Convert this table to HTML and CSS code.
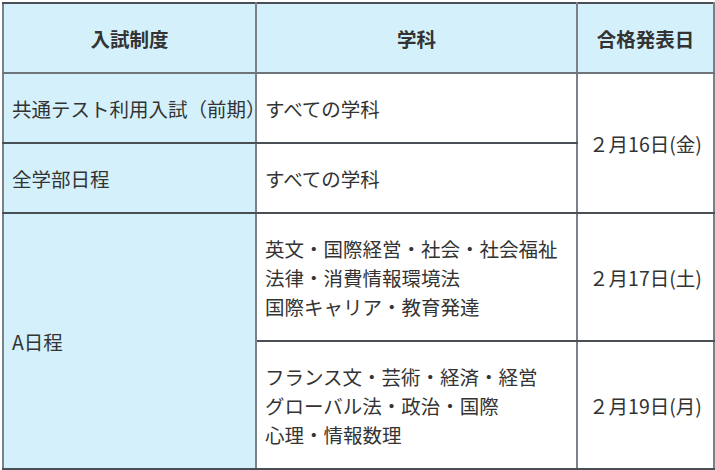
FILE: index.html
```html
<!DOCTYPE html>
<html lang="ja">
<head>
<meta charset="utf-8">
<link rel="stylesheet" href="styles.css">
</head>
<body>
<table class="sched">
  <colgroup>
    <col class="c1">
    <col class="c2">
    <col class="c3">
  </colgroup>
  <thead>
    <tr>
      <th>入試制度</th>
      <th>学科</th>
      <th>合格発表日</th>
    </tr>
  </thead>
  <tbody>
    <tr>
      <td class="kind">共通テスト利用入試（前期）</td>
      <td class="dept">すべての学科</td>
      <td class="date" rowspan="2">２月16日(金)</td>
    </tr>
    <tr>
      <td class="kind">全学部日程</td>
      <td class="dept">すべての学科</td>
    </tr>
    <tr>
      <td class="kind" rowspan="2">A日程</td>
      <td class="dept">英文・国際経営・社会・社会福祉<br>法律・消費情報環境法<br>国際キャリア・教育発達</td>
      <td class="date">２月17日(土)</td>
    </tr>
    <tr>
      <td class="dept">フランス文・芸術・経済・経営<br>グローバル法・政治・国際<br>心理・情報数理</td>
      <td class="date">２月19日(月)</td>
    </tr>
  </tbody>
</table>
</body>
</html>
```

FILE: styles.css
```css
html, body {
  margin: 0;
  padding: 0;
  background: #ffffff;
}

body {
  padding: 2px 0 0 2px;
  font-family: "Noto Sans CJK JP", "Noto Sans", sans-serif;
  color: #333333;
}

.sched {
  border-collapse: collapse;
  table-layout: fixed;
  width: 713px;
  font-size: 19.5px;
  line-height: 29px;
  border: 2px solid #6e747a;
}

.c1 { width: 253px; }
.c2 { width: 321px; }

.sched th,
.sched td {
  height: 29px;
  padding: 19.5px 8px 19.5px 8px;
  border-left: 2px solid #7b8188;
  border-right: 2px solid #7b8188;
  border-top: 2px solid #4a4f55;
  border-bottom: 2px solid #4a4f55;
  vertical-align: middle;
}

.sched th {
  background: #d4f1fb;
  font-weight: 700;
  text-align: center;
  border-bottom-color: #6e747a;
}

.kind {
  background: #d4f1fb;
  text-align: left;
  white-space: nowrap;
  padding-left: 7px;
  padding-right: 0;
}

.dept {
  text-align: left;
  white-space: nowrap;
}

.date {
  text-align: center;
  white-space: nowrap;
}
```
